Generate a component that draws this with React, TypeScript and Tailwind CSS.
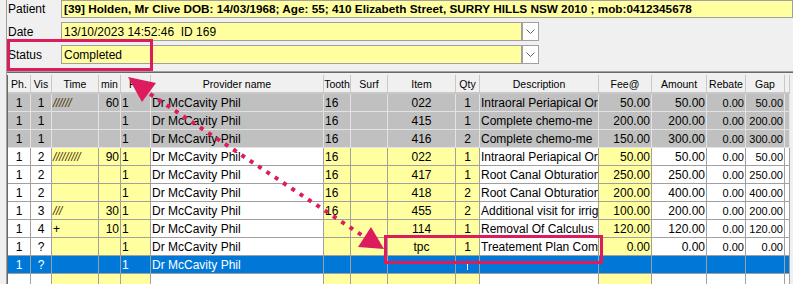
import React from "react";

type Kind = "gray" | "white" | "sel" | "blank";
type Row = { c: string[]; kind: Kind };

const rows: Row[] = [
  { kind: "gray", c: ["1", "1", "//////", "60", "1", "Dr McCavity Phil", "16", "", "022", "1", "Intraoral Periapical Or", "50.00", "50.00", "0.00", "50.00"] },
  { kind: "gray", c: ["1", "1", "", "", "1", "Dr McCavity Phil", "16", "", "415", "1", "Complete chemo-me", "200.00", "200.00", "0.00", "200.00"] },
  { kind: "gray", c: ["1", "1", "", "", "1", "Dr McCavity Phil", "16", "", "416", "2", "Complete chemo-me", "150.00", "300.00", "0.00", "300.00"] },
  { kind: "white", c: ["1", "2", "/////////", "90", "1", "Dr McCavity Phil", "16", "", "022", "1", "Intraoral Periapical Or", "50.00", "50.00", "0.00", "50.00"] },
  { kind: "white", c: ["1", "2", "", "", "1", "Dr McCavity Phil", "16", "", "417", "1", "Root Canal Obturation", "250.00", "250.00", "0.00", "250.00"] },
  { kind: "white", c: ["1", "2", "", "", "1", "Dr McCavity Phil", "16", "", "418", "2", "Root Canal Obturation", "200.00", "400.00", "0.00", "400.00"] },
  { kind: "white", c: ["1", "3", "///", "30", "1", "Dr McCavity Phil", "16", "", "455", "2", "Additional visit for irrig", "100.00", "200.00", "0.00", "200.00"] },
  { kind: "white", c: ["1", "4", "+", "10", "1", "Dr McCavity Phil", "", "", "114", "1", "Removal Of Calculus", "120.00", "120.00", "0.00", "120.00"] },
  { kind: "white", c: ["1", "?", "", "", "1", "Dr McCavity Phil", "", "", "tpc", "1", "Treatement Plan Com", "0.00", "0.00", "0.00", "0.00"] },
  { kind: "sel", c: ["1", "?", "", "", "1", "Dr McCavity Phil", "", "", "", "|", "", "", "", "", ""] },
  { kind: "blank", c: ["", "", "", "", "", "", "", "", "", "", "", "", "", "", ""] },
];

const headers = ["Ph.", "Vis", "Time", "min", "Pr.", "Provider name", "Tooth", "Surf", "Item", "Qty", "Description", "Fee@", "Amount", "Rebate", "Gap"];

const align = ["c", "c", "l", "r", "l", "l", "l", "l", "c", "c", "l", "r", "r", "r", "r"];
const yellow = [false, false, true, true, true, false, true, true, true, true, false, true, false, false, false];

function alignCls(a: string) {
  if (a === "c") return "justify-center";
  if (a === "r") return "justify-end";
  return "justify-start";
}

function Cell({ text, col, kind }: { text: string; col: number; kind: Kind }) {
  let bg = "bg-white";
  let border = "border-[#a0a0a0]";
  let color = "text-black";
  if (kind === "gray") {
    bg = "bg-[#c0c0c0]";
    border = "border-[#e3e3e3]";
  } else if (kind === "sel") {
    bg = "bg-[#0078d7]";
    border = "border-[#a0a0a0]";
    color = "text-white";
  } else if (yellow[col]) {
    bg = "bg-[#ffffa0]";
  }
  const small = col >= 13 ? "text-[11px]" : "";
  const isTime = col === 2 && text.startsWith("/");
  return (
    <div className={`flex items-center overflow-hidden whitespace-nowrap border-r border-b h-[18px] px-[1px] ${bg} ${border} ${color} ${small} ${alignCls(align[col])}`}>
      {kind === "sel" && text === "|" ? (
        <span className="block w-px h-[8px] bg-white mt-[2px]" />
      ) : isTime ? (
        <span className="italic text-[#4a3400] tracking-[-0.3px]">{text}</span>
      ) : (
        <span>{text}</span>
      )}
    </div>
  );
}

function Chevron() {
  return (
    <div className="w-[17px] h-[19px] bg-white border border-[#a0a0a0] flex items-center justify-center">
      <svg width="9" height="5" viewBox="0 0 9 5">
        <polyline points="0.5,0.5 4.5,4.5 8.5,0.5" fill="none" stroke="#606060" strokeWidth="1" />
      </svg>
    </div>
  );
}

export default function App() {
  return (
    <div
      className="relative w-[793px] h-[284px] bg-[#f0f0f0] overflow-hidden text-[12px] leading-[14px] text-black"
      style={{ fontFamily: '"Liberation Sans", Arial, sans-serif' }}
    >
      <div className="ml-[6px] border-l border-[#a0a0a0] h-full flex flex-col">
        {/* top panel */}
        <div className="flex flex-col h-[71px]">
          <div className="flex items-center h-[18px]">
            <div className="w-[54px] pl-[1px]">Patient</div>
            <div className="flex-1 h-[18px] bg-[#ffffa0] border border-[#a0a0a0] flex items-center pl-[2px] font-bold text-[11.75px] whitespace-nowrap overflow-hidden">
              [39] Holden, Mr Clive DOB: 14/03/1968; Age: 55; 410 Elizabeth Street, SURRY HILLS NSW 2010 ; mob:0412345678
            </div>
          </div>
          <div className="flex items-center h-[19px] mt-[4px]">
            <div className="w-[54px] pl-[1px]">Date</div>
            <div className="w-[461px] h-[19px] bg-[#ffffa0] border border-[#a0a0a0] flex items-center pl-[2px] whitespace-pre">
              13/10/2023 14:52:46  ID 169
            </div>
            <Chevron />
          </div>
          <div className="flex items-center h-[19px] mt-[4px]">
            <div className="w-[54px] pl-[1px]">Status</div>
            <div className="w-[461px] h-[19px] bg-[#ffffa0] border border-[#a0a0a0] flex items-center pl-[2px]">
              Completed
            </div>
            <Chevron />
          </div>
        </div>
        {/* separator */}
        <div className="h-[1px] bg-[#a0a0a0]" />
        <div className="h-[1px] bg-[#696969]" />
        <div className="h-[2px]" />
        {/* table */}
        <div className="flex-1 border-l border-[#696969] mr-[3px] overflow-hidden">
          <div className="grid grid-cols-[23px_21px_47px_22px_30px_173px_27px_37px_68px_24px_119px_53px_55px_39px_39px_1fr]">
            {headers.map((h) => (
              <div key={h} className="flex items-center justify-center h-[19px] bg-[#f0f0f0] border-r border-b-2 border-[#c8c8c8] whitespace-nowrap overflow-hidden text-[10.5px]">
                {h}
              </div>
            ))}
            <div className="h-[19px] bg-[#f0f0f0] border-b-2 border-r border-[#c8c8c8]" />
            {rows.map((r, ri) => (
              <React.Fragment key={ri}>
                {r.c.map((t, ci) => (
                  <Cell key={ci} text={t} col={ci} kind={r.kind} />
                ))}
                <div className={`h-[18px] border-b border-r ${r.kind === "gray" ? "bg-[#c0c0c0] border-[#e3e3e3]" : r.kind === "sel" ? "bg-[#0078d7] border-[#a0a0a0]" : "bg-white border-[#a0a0a0]"}`} />
              </React.Fragment>
            ))}
          </div>
        </div>
      </div>

      {/* annotations */}
      <svg className="absolute inset-0 pointer-events-none" width="793" height="284" viewBox="0 0 793 284">
        <rect x="8.5" y="40.5" width="143" height="29" fill="none" stroke="#dc1c5c" strokeWidth="3" />
        <rect x="385.5" y="236.5" width="216" height="26" fill="none" stroke="#dc1c5c" strokeWidth="3" />
        <line x1="150" y1="94" x2="363" y2="236" stroke="#dc1c5c" strokeWidth="4" strokeDasharray="4 6" />
        <polygon points="128,77 156,83 142,102" fill="#dc1c5c" />
        <polygon points="384,249 358,247 371,227" fill="#dc1c5c" />
      </svg>
    </div>
  );
}
